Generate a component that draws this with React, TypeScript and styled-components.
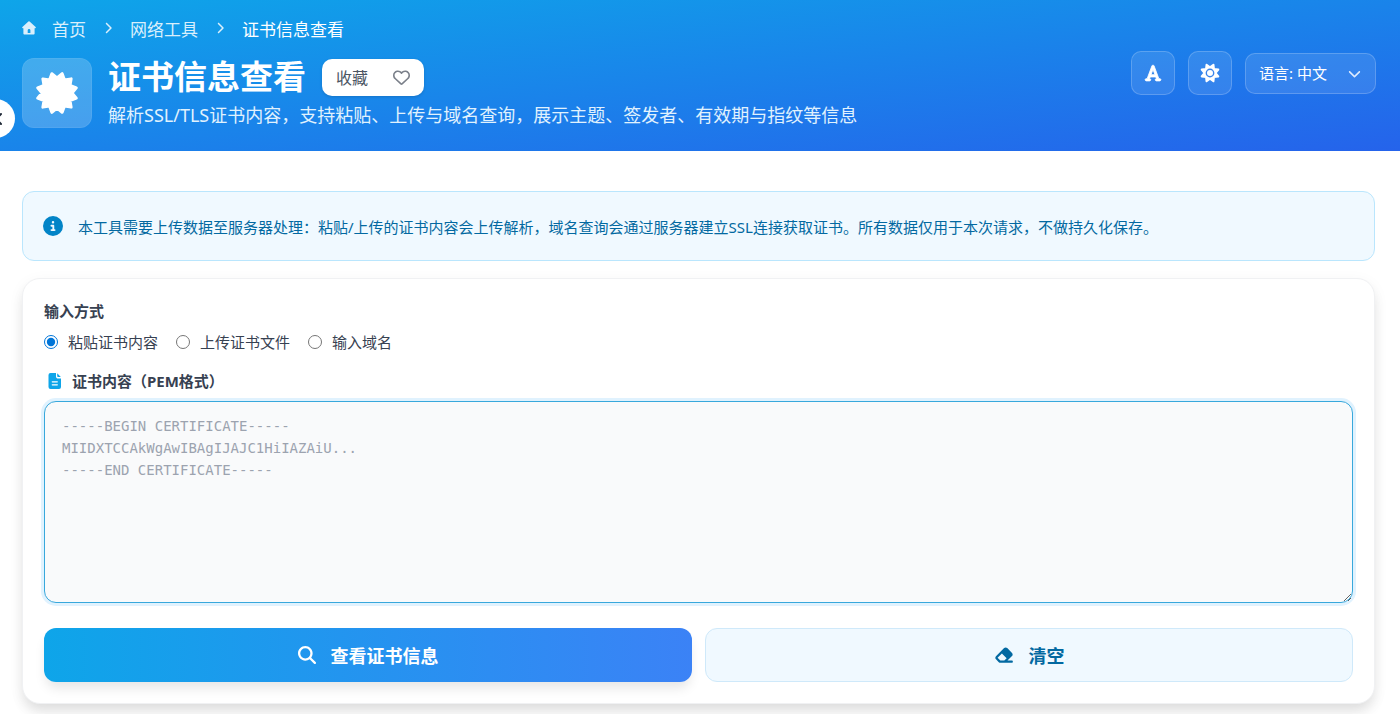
import React from "react";
import styled, { createGlobalStyle } from "styled-components";
import {
  FaFont, FaChevronDown, FaChevronRight, FaRegHeart,
  FaCircleInfo, FaMagnifyingGlass, FaEraser,
} from "react-icons/fa6";

const GlobalStyle = createGlobalStyle`
  * { box-sizing: border-box; }
  body {
    margin: 0;
    background: #fff;
    color: #374151;
    font-family: "Noto Sans", "Noto Sans CJK SC", sans-serif;
    font-size: 15px;
  }
  button, select, input { font-family: inherit; }
`;

const Header = styled.header`
  position: relative;
  padding: 14px 24px 23px 22px;
  color: #fff;
  background: linear-gradient(to bottom right, #0ea5e9, #2563eb);
`;

const Breadcrumb = styled.nav`
  display: flex;
  align-items: center;
  gap: 16px;
  height: 28px;
  font-size: 17px;
  color: #d9effc;
`;

const Crumb = styled.a<{ $current?: boolean }>`
  display: flex;
  align-items: center;
  gap: 16px;
  color: ${(p) => (p.$current ? "#fff" : "inherit")};
  text-decoration: none;
`;

const HeaderRow = styled.div`
  display: flex;
  align-items: flex-start;
  justify-content: space-between;
`;

const Intro = styled.div`
  display: flex;
  align-items: flex-start;
  gap: 16px;
  padding-top: 16px;
`;

const Badge = styled.div`
  display: grid;
  place-items: center;
  width: 70px;
  height: 70px;
  border: 1px solid rgba(255, 255, 255, 0.06);
  border-radius: 12px;
  background: rgba(255, 255, 255, 0.2);
`;

const TitleRow = styled.div`
  display: flex;
  align-items: center;
  gap: 16px;
  height: 38px;
`;

const Title = styled.h1`
  margin: 0;
  font-size: 33px;
  line-height: 36px;
  font-weight: 700;
`;

const Favorite = styled.button`
  display: flex;
  align-items: center;
  justify-content: space-between;
  width: 102px;
  height: 37px;
  padding: 0 14px;
  border: 0;
  border-radius: 10px;
  background: #fff;
  color: #4b5563;
  font-size: 16px;
  box-shadow: 0 1px 3px rgba(0, 0, 0, 0.15);
`;

const Description = styled.p`
  margin: 6px 0 0;
  font-size: 18px;
  line-height: 26px;
  color: #e0f2fe;
`;

const Tools = styled.div`
  display: flex;
  align-items: center;
  gap: 13px;
  padding-top: 9px;
`;

const ToolButton = styled.button`
  display: grid;
  place-items: center;
  width: 44px;
  height: 44px;
  padding: 0;
  border: 1px solid rgba(255, 255, 255, 0.2);
  border-radius: 10px;
  background: rgba(255, 255, 255, 0.1);
  color: #fff;
`;

const LanguageBox = styled.div`
  display: grid;
  align-items: center;
  width: 131px;
  height: 41px;
  > * { grid-area: 1 / 1; }
  > svg { justify-self: end; margin-right: 15px; pointer-events: none; color: #dbeafe; }
`;

const LanguageSelect = styled.select`
  appearance: none;
  width: 100%;
  height: 100%;
  padding: 0 13px;
  border: 1px solid rgba(255, 255, 255, 0.2);
  border-radius: 10px;
  background: rgba(255, 255, 255, 0.1);
  color: #fff;
  font-size: 15px;
`;

const SideToggle = styled.button`
  position: absolute;
  left: -24px;
  top: 99px;
  display: flex;
  align-items: center;
  justify-content: flex-end;
  width: 39px;
  height: 39px;
  padding: 0 13px;
  border: 0;
  border-radius: 50%;
  background: #fff;
  color: #1f2937;
`;

const Main = styled.main`
  display: flex;
  flex-direction: column;
  gap: 17px;
  padding: 40px 25px 24px 22px;
`;

const Notice = styled.div`
  display: flex;
  align-items: center;
  gap: 15px;
  min-height: 70px;
  padding: 0 20px;
  border: 1px solid #bae6fd;
  border-radius: 12px;
  background: #f0f9ff;
  color: #0369a1;
  > svg { color: #0284c7; flex: none; }
`;

const Card = styled.form`
  display: flex;
  flex-direction: column;
  padding: 21px;
  border: 1px solid #f0f1f3;
  border-radius: 18px;
  background: #fff;
  box-shadow: 0 9px 13px -2px rgba(0, 0, 0, 0.1), 0 4px 16px rgba(0, 0, 0, 0.05);
`;

const Methods = styled.fieldset`
  display: flex;
  gap: 18px;
  margin: 0;
  padding: 0;
  border: 0;
`;

const Legend = styled.legend`
  padding: 0;
  margin-bottom: 8px;
  font-weight: 700;
  line-height: 22px;
`;

const Option = styled.label`
  display: flex;
  align-items: center;
  gap: 10px;
  line-height: 24px;
`;

const Radio = styled.input`
  width: 14px;
  height: 14px;
  margin: 0;
  accent-color: #0075d8;
`;

const FieldLabel = styled.label`
  display: flex;
  align-items: center;
  gap: 10px;
  margin-top: 16px;
  padding-left: 4px;
  font-weight: 700;
  line-height: 22px;
  > svg { color: #0ea5e9; }
`;

const PemInput = styled.textarea`
  display: block;
  width: 100%;
  height: 202px;
  margin: 9px 0 25px;
  padding: 13px 17px;
  border: 1px solid #38a8dc;
  border-radius: 12px;
  outline: 0;
  background: #f9fafb;
  box-shadow: 0 0 0 3px #e0f2fe;
  font-family: "DejaVu Sans Mono", "Liberation Mono", monospace;
  font-size: 14px;
  line-height: 22px;
  resize: vertical;
  &::placeholder { color: #9ca3af; }
`;

const Actions = styled.div`
  display: grid;
  grid-template-columns: 1fr 1fr;
  gap: 13px;
`;

const Action = styled.button<{ $primary?: boolean }>`
  display: flex;
  align-items: center;
  justify-content: center;
  gap: 15px;
  height: 54px;
  border: ${(p) => (p.$primary ? "0" : "1px solid #cfe9fa")};
  border-radius: 12px;
  background: ${(p) => (p.$primary ? "linear-gradient(to right, #0ea5e9, #3b82f6)" : "#f0f9ff")};
  color: ${(p) => (p.$primary ? "#fff" : "#0369a1")};
  box-shadow: ${(p) => (p.$primary ? "0 8px 12px -2px rgba(0, 0, 0, 0.1)" : "none")};
  font-size: 18px;
  font-weight: 700;
`;

/* Alternating outer and inner vertices of a star, starting with a notch at the top. */
const starPoints = (count: number, center: number, outer: number, inner: number) =>
  Array.from({ length: count * 2 }, (_, i) => {
    const r = i % 2 ? outer : inner;
    const a = (Math.PI * i) / count;
    return `${(center + r * Math.sin(a)).toFixed(2)},${(center - r * Math.cos(a)).toFixed(2)}`;
  }).join(" ");

const SealIcon = () => (
  <svg width="44" height="44" viewBox="0 0 44 44" fill="#fff" stroke="#fff" strokeWidth="3" strokeLinejoin="round" aria-hidden="true">
    <polygon points={starPoints(12, 22, 20, 15)} />
  </svg>
);

const HomeIcon = () => (
  <svg width="14" height="14" viewBox="0 0 14 14" aria-hidden="true">
    <path
      fill="currentColor"
      fillRule="evenodd"
      d="M6.4.6a.9.9 0 0 1 1.2 0l6 5.3c.6.5.2 1.4-.5 1.4h-.5v5.1c0 .7-.5 1.2-1.2 1.2H2.6c-.7 0-1.2-.5-1.2-1.2V7.3H.9c-.7 0-1-.9-.5-1.4zM5.7 12h2.7V9.3a1.35 1.35 0 0 0-2.7 0z"
    />
  </svg>
);

const GearIcon = () => (
  <svg width="20" height="20" viewBox="0 0 20 20" fill="none" aria-hidden="true">
    <polygon points={starPoints(8, 10, 9, 5.6)} fill="#fff" stroke="#fff" strokeWidth="2" strokeLinejoin="round" />
    <circle cx="10" cy="10" r="3.7" stroke="#3a85ec" strokeWidth="1.4" />
  </svg>
);

const FileIcon = () => (
  <svg width="14" height="16" viewBox="0 0 14 16" aria-hidden="true">
    <path fill="currentColor" d="M2.5 0H8v3.5C8 4.9 9.100 5.500 10 5.500h3V14a2 2 0 0 1-2 2H2.500a2 2 0 0 1-2-2V2a2 2 0 0 1 2-2zM9.200.2 12.800 4H10a.8.8 0 0 1-.8-.8z" />
    <path stroke="#fff" strokeWidth="1.3" strokeLinecap="round" d="M4.3 8.800h5M4.300 11.800h5" />
  </svg>
);

const CollapseIcon = () => (
  <svg width="10" height="16" viewBox="0 0 10 16" fill="none" stroke="currentColor" strokeWidth="2" strokeLinecap="round" aria-hidden="true">
    <path d="M9 3 4 8l5 5" />
  </svg>
);

export default function App() {
  return (
    <>
      <GlobalStyle />
      <Header>
        <Breadcrumb aria-label="面包屑">
          <Crumb href="#"><HomeIcon />首页</Crumb>
          <FaChevronRight size={12} />
          <Crumb href="#">网络工具</Crumb>
          <FaChevronRight size={12} />
          <Crumb href="#" $current aria-current="page">证书信息查看</Crumb>
        </Breadcrumb>
        <HeaderRow>
          <Intro>
            <Badge><SealIcon /></Badge>
            <div>
              <TitleRow>
                <Title>证书信息查看</Title>
                <Favorite type="button">收藏<FaRegHeart size={17} color="#7b808a" /></Favorite>
              </TitleRow>
              <Description>解析SSL/TLS证书内容，支持粘贴、上传与域名查询，展示主题、签发者、有效期与指纹等信息</Description>
            </div>
          </Intro>
          <Tools>
            <ToolButton type="button" aria-label="字体"><FaFont size={18} stroke="currentColor" strokeWidth={24} /></ToolButton>
            <ToolButton type="button" aria-label="设置"><GearIcon /></ToolButton>
            <LanguageBox>
              <LanguageSelect aria-label="语言" defaultValue="zh">
                <option value="zh">语言: 中文</option>
              </LanguageSelect>
              <FaChevronDown size={13} />
            </LanguageBox>
          </Tools>
        </HeaderRow>
        <SideToggle type="button" aria-label="展开侧栏"><CollapseIcon /></SideToggle>
      </Header>
      <Main>
        <Notice>
          <FaCircleInfo size={20} />
          <span>本工具需要上传数据至服务器处理：粘贴/上传的证书内容会上传解析，域名查询会通过服务器建立SSL连接获取证书。所有数据仅用于本次请求，不做持久化保存。</span>
        </Notice>
        <Card>
          <Methods>
            <Legend>输入方式</Legend>
            <Option><Radio type="radio" name="method" defaultChecked />粘贴证书内容</Option>
            <Option><Radio type="radio" name="method" />上传证书文件</Option>
            <Option><Radio type="radio" name="method" />输入域名</Option>
          </Methods>
          <FieldLabel htmlFor="pem"><FileIcon />证书内容（PEM格式）</FieldLabel>
          <PemInput
            id="pem"
            placeholder={"-----BEGIN CERTIFICATE-----\nMIIDXTCCAkWgAwIBAgIJAJC1HiIAZAiU...\n-----END CERTIFICATE-----"}
          />
          <Actions>
            <Action type="button" $primary><FaMagnifyingGlass size={18} />查看证书信息</Action>
            <Action type="button"><FaEraser size={20} />清空</Action>
          </Actions>
        </Card>
      </Main>
    </>
  );
}
